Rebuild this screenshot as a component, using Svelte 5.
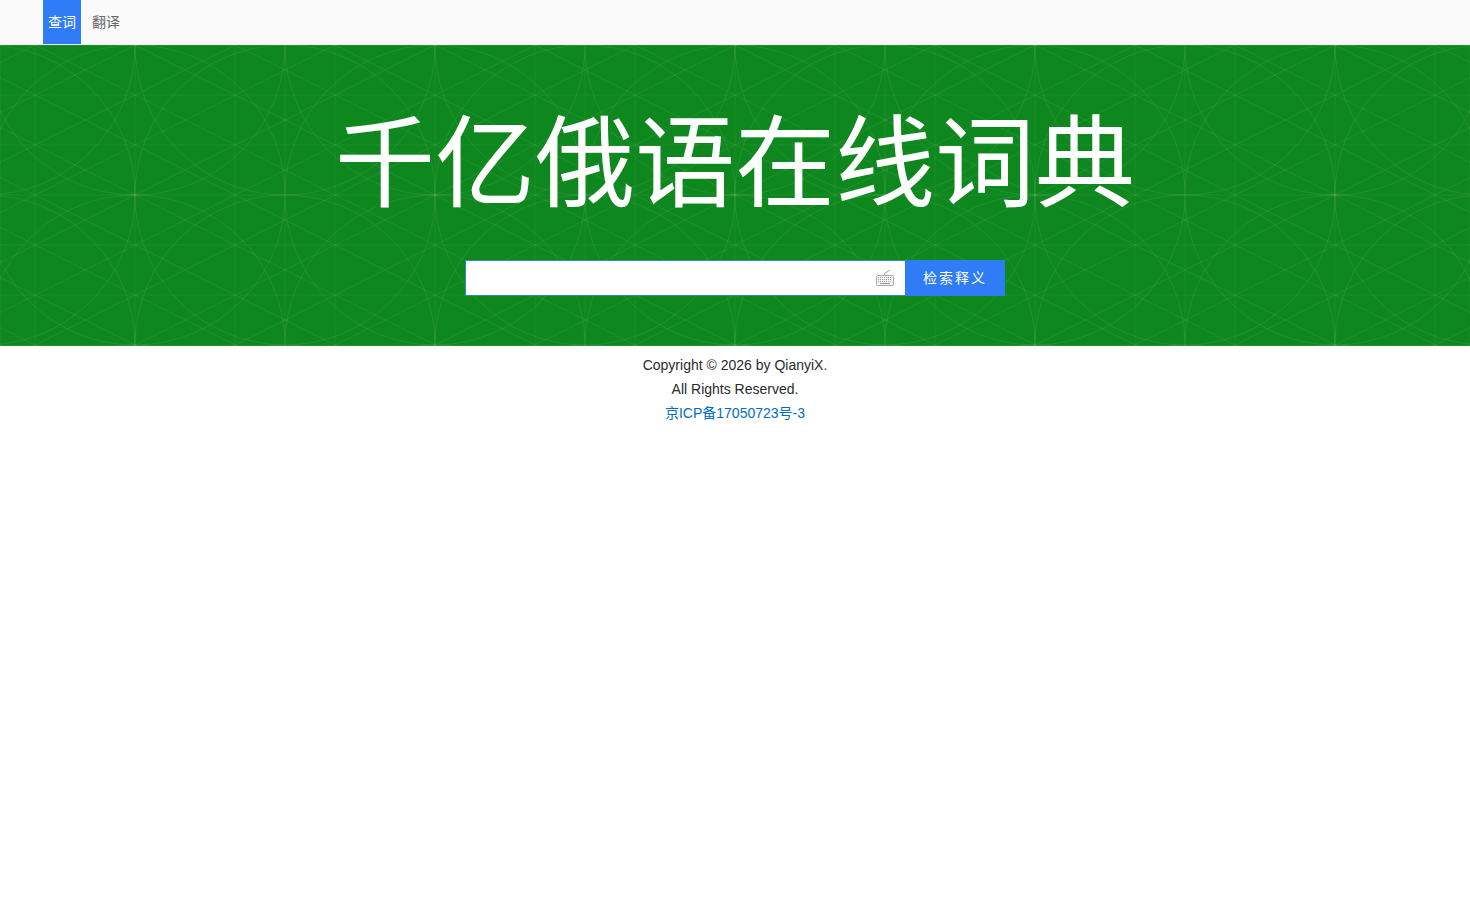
<script>
  const diagonals = [];
  for (let k = -12; k <= 12; k++) {
    diagonals.push({ x1: 0, y1: -25 + 50 * k, x2: 300, y2: 125 + 50 * k });
    diagonals.push({ x1: 0, y1: 25 + 50 * k, x2: 300, y2: -125 + 50 * k });
  }
  const circles = [];
  for (const cx of [0, 150, 300]) for (const cy of [0, 150, 300]) circles.push({ cx, cy });
  const rows = [0, 50, 100, 150, 200, 250, 300];
  const cols = [0, 50, 150, 250, 300];
</script>

<nav class="nav">
  <a class="item active" href="#a">查词</a>
  <a class="item" href="#b">翻译</a>
</nav>

<header class="banner">
  <svg class="pattern" aria-hidden="true" width="100%" height="100%">
    <defs>
      <pattern id="tile" width="300" height="300" x="-15" y="0" patternUnits="userSpaceOnUse">
        {#each diagonals as d}
          <line x1={d.x1} y1={d.y1} x2={d.x2} y2={d.y2} />
        {/each}
        {#each circles as c}
          <circle cx={c.cx} cy={c.cy} r="150" />
        {/each}
        {#each rows as y}
          <line class="faint" x1="0" y1={y} x2="300" y2={y} />
        {/each}
        {#each cols as x}
          <line class="faint" x1={x} y1="0" x2={x} y2="300" />
        {/each}
      </pattern>
    </defs>
    <rect width="100%" height="100%" fill="url(#tile)" />
  </svg>
  <h1>千亿俄语在线词典</h1>
  <form class="search" onsubmit={(e) => e.preventDefault()}>
    <div class="field">
      <input type="text" aria-label="search" />
      <svg class="kbd" viewBox="0 0 20 18" width="20" height="18" aria-hidden="true">
        <path d="M9.5 6.5 V5 Q9.5 4 11 3.5 L15 1" fill="none" stroke="#aaa" stroke-width="1" />
        <rect x="1.5" y="6.5" width="17" height="10" rx="1" fill="#f4f4f4" stroke="#aaa" />
        <path d="M3 8.5 H17 M3 10.5 H17 M3 12.5 H17" stroke="#999" stroke-width="1" stroke-dasharray="1 1" />
        <path d="M5 14.5 H15" stroke="#999" stroke-width="1" />
      </svg>
    </div>
    <button type="submit">检索释义</button>
  </form>
</header>

<footer class="foot">
  <div>Copyright © 2026 by QianyiX.</div>
  <div>All Rights Reserved.</div>
  <div><a href="#c">京ICP备17050723号-3</a></div>
</footer>

<style>
  :global(body) {
    margin: 0;
    background: #fff;
    font-family: "Liberation Sans", "Noto Sans CJK SC", sans-serif;
    font-size: 14px;
    color: #292b2c;
  }
  .nav {
    display: flex;
    height: 44px;
    padding-left: 43px;
    background: #fafafa;
    border-bottom: 1px solid #eeeeee;
  }
  .item {
    display: flex;
    align-items: center;
    padding: 0 5px 2px;
    margin-right: 6px;
    color: #666;
    text-decoration: none;
  }
  .item.active {
    background: #2f7cf6;
    color: #fff;
  }
  .banner {
    position: relative;
    box-sizing: border-box;
    height: 301px;
    padding-top: 54px;
    background: #0e871e;
    display: flex;
    flex-direction: column;
    align-items: center;
    overflow: hidden;
  }
  .pattern {
    position: absolute;
    inset: 0;
    stroke: rgba(255, 255, 255, 0.07);
    fill: none;
  }
  .pattern .faint {
    stroke: rgba(255, 255, 255, 0.045);
  }
  h1 {
    position: relative;
    margin: 0;
    height: 161px;
    line-height: 130px;
    font-size: 100px;
    font-weight: 400;
    color: #fff;
  }
  .search {
    position: relative;
    display: flex;
    width: 540px;
    height: 36px;
  }
  .field {
    position: relative;
    width: 440px;
  }
  input {
    box-sizing: border-box;
    display: block;
    width: 100%;
    height: 100%;
    border: 1px solid #2f8db5;
    border-right: 0;
    outline: none;
    background: #fff;
    padding: 0 40px 0 8px;
  }
  .kbd {
    position: absolute;
    right: 10px;
    top: 9px;
  }
  button {
    width: 100px;
    border: 0;
    padding: 0 0 3px;
    background: #2f7cf6;
    color: #fff;
    font: inherit;
    letter-spacing: 2px;
  }
  .foot {
    padding-top: 7px;
    text-align: center;
    line-height: 24px;
  }
  .foot a {
    color: #026cc8;
    text-decoration: none;
  }
</style>
